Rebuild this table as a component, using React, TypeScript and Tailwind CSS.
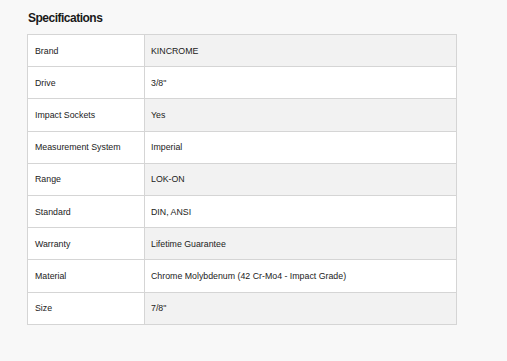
const specs = [
  { label: 'Brand', value: 'KINCROME' },
  { label: 'Drive', value: '3/8"' },
  { label: 'Impact Sockets', value: 'Yes' },
  { label: 'Measurement System', value: 'Imperial' },
  { label: 'Range', value: 'LOK-ON' },
  { label: 'Standard', value: 'DIN, ANSI' },
  { label: 'Warranty', value: 'Lifetime Guarantee' },
  { label: 'Material', value: 'Chrome Molybdenum (42 Cr-Mo4 - Impact Grade)' },
  { label: 'Size', value: '7/8"' },
];

export default function App() {
  return (
    <div className="min-h-[361px] w-[507px] bg-[#f8f8f8] pl-[27px] pt-[10px] font-['Liberation_Sans',sans-serif] text-[#222]">
      <h2 className="mb-[8px] pl-[1px] text-[12px] font-bold leading-[16px] tracking-[-0.5px] text-[#1a1a1a]">
        Specifications
      </h2>
      <div className="w-[430px] border-t border-l border-[#d5d5d5]">
        {specs.map((s, i) => (
          <div key={s.label} className="flex h-[32.2px] border-b border-[#d5d5d5] text-[8.8px] leading-none">
            <div className="flex w-[117px] items-center border-r border-[#d5d5d5] bg-white pl-[7px] pt-[1px]">
              {s.label}
            </div>
            <div
              className={`flex flex-1 items-center border-r border-[#d5d5d5] pl-[6px] pt-[1px] ${
                i % 2 === 0 ? 'bg-[#f2f2f2]' : 'bg-white'
              }`}
            >
              {s.value}
            </div>
          </div>
        ))}
      </div>
    </div>
  );
}
